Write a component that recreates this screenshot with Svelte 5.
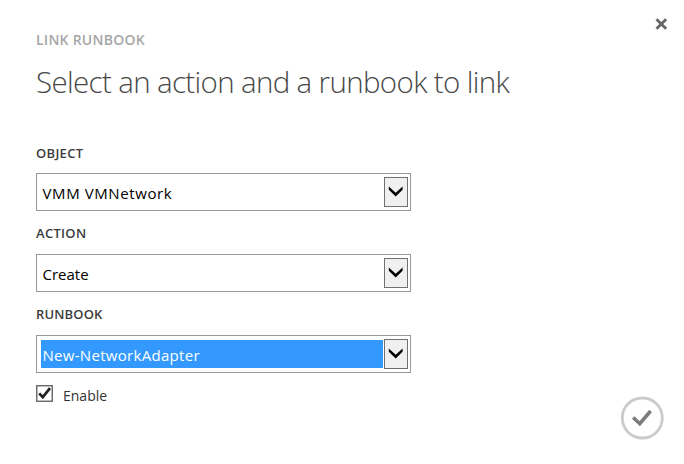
<script>
  const fields = [
    { label: 'OBJECT', value: 'VMM VMNetwork', key: 'object' },
    { label: 'ACTION', value: 'Create', key: 'action' },
    { label: 'RUNBOOK', value: 'New-NetworkAdapter', key: 'runbook', selected: true },
  ];
</script>

<main class="dialog">
  <header>
    <div class="eyebrow"><span>LINK RUNBOOK</span></div>
    <button class="close" aria-label="Close">
      <svg width="12" height="12" viewBox="0 0 12 12"><path d="M2.5 2.2L10.1 9.8M10.1 2.2L2.5 9.8" stroke="#666" stroke-width="2.8" stroke-linecap="square" /></svg>
    </button>
  </header>
  <h1>Select an action and a runbook to link</h1>
  <form>
    {#each fields as f}
      <div class="field">
        <div class="label {f.key}">{f.label}</div>
        <div class="select" class:selected={f.selected}>
          <div class="value {f.key}">{f.value}</div>
          <div class="drop">
            <svg width="22" height="28" viewBox="0 0 22 28"><path d="M3.8 8.4L10.7 14.8L17.6 8.4V11.7L10.7 18.6L3.8 11.7Z" fill="#000" /></svg>
          </div>
        </div>
      </div>
    {/each}
    <div class="enable">
      <svg class="box" width="17" height="17" viewBox="0 0 17 17"><rect x=".75" y=".75" width="15.5" height="15.5" fill="#fff" stroke="#666" stroke-width="1.4" /><path d="M3.2 8.4L6.8 12.2L14 3.2" fill="none" stroke="#222" stroke-width="2.7" /></svg>
      <span>Enable</span>
    </div>
  </form>
  <button class="ok" aria-label="Complete">
    <svg width="44" height="44" viewBox="0 0 44 44"><circle cx="22.3" cy="22" r="20" fill="none" stroke="#cbcbcb" stroke-width="2.8" /><path d="M13.2 21.5L19.8 27.7L30.6 15" fill="none" stroke="#7c7c7c" stroke-width="3.6" /></svg>
  </button>
</main>

<style>
  :global(body) { background: #fff; }
  .dialog {
    box-sizing: border-box;
    width: 684px;
    height: 464px;
    padding: 0 20px 0 36px;
    display: flex;
    flex-direction: column;
    overflow: hidden;
    font-family: "Open Sans", "Noto Sans", sans-serif;
  }
  button { padding: 0; border: 0; background: none; display: block; }
  svg { display: block; }
  header { display: flex; justify-content: space-between; height: 50px; flex: none; }
  .eyebrow { padding-top: 30px; font-size: 14px; line-height: 20px; font-weight: 600; letter-spacing: .25px; color: #a6a6a6; white-space: nowrap; }
  .close { margin: 18px -3px 0 0; width: 12px; height: 12px; }
  h1 { margin: 12px 0 0; height: 40px; line-height: 40px; font-size: 29.5px; font-weight: 300; letter-spacing: -.65px; color: #484848; white-space: nowrap; flex: none; }
  form { padding-top: 41px; height: 262px; flex: none; }
  .field { height: 81px; }
  .label { height: 30px; line-height: 18px; font-size: 13px; font-weight: 600; letter-spacing: .3px; color: #3c3c3c; }
  .label.object { line-height: 20px; }
  .label.runbook { letter-spacing: .15px; }
  .select {
    box-sizing: border-box;
    width: 375px;
    height: 38px;
    border: 1px solid #999;
    padding: 3px 2px 3px 4px;
    display: flex;
    justify-content: space-between;
  }
  .value { width: 342px; height: 28px; margin-top: 1px; line-height: 30px; font-size: 15px; color: #000; padding-left: 1.5px; box-sizing: border-box; white-space: nowrap; }
  .value.object { letter-spacing: .6px; }
  .value.runbook { letter-spacing: .3px; }
  .selected .value { background: #3399ff; color: #fff; }
  .drop { box-sizing: border-box; width: 24px; height: 30px; border: 1px solid #707070; background: #f0f0f0; }
  .enable { display: flex; height: 20px; line-height: 20px; font-size: 14px; color: #333; }
  .box { margin: -1px 10px 0 0; }
  .ok { align-self: flex-end; margin-top: -9px; }
</style>
